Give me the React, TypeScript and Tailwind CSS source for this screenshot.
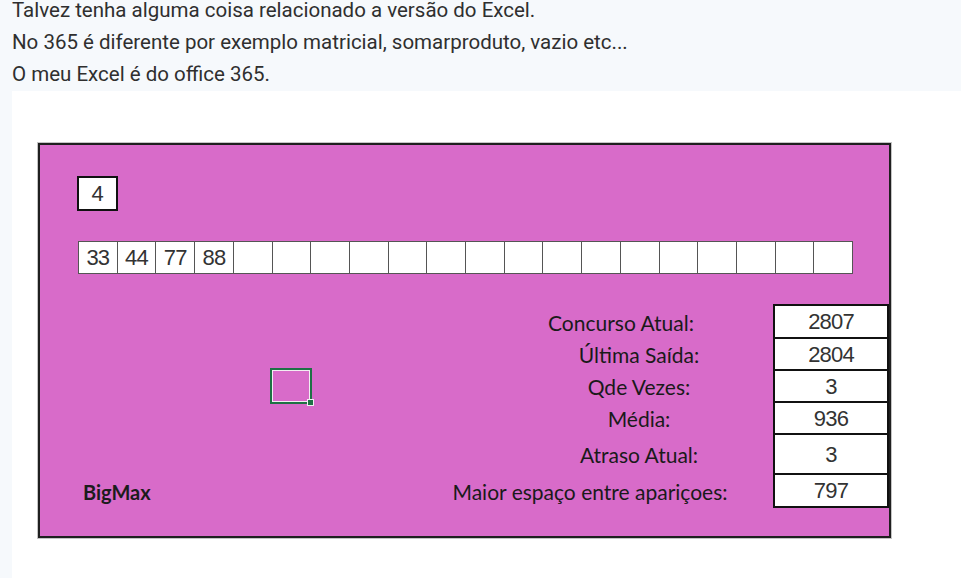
const numbers = ['33', '44', '77', '88', '', '', '', '', '', '', '', '', '', '', '', '', '', '', '', ''];

const stats = [
  { label: 'Concurso Atual:', value: '2807', height: 'h-[33px]', shift: 'pr-[36px]' },
  { label: 'Última Saída:', value: '2804', height: 'h-[32px]', shift: '' },
  { label: 'Qde Vezes:', value: '3', height: 'h-[32px]', shift: '' },
  { label: 'Média:', value: '936', height: 'h-[32px]', shift: '' },
  { label: 'Atraso Atual:', value: '3', height: 'h-[40px]', shift: '' },
  { label: 'Maior espaço entre apariçoes:', value: '797', height: 'h-[33px]', shift: 'pr-[98px]' },
];

const calibri = { fontFamily: 'Lato, "Open Sans", sans-serif' };
const arial = { fontFamily: '"Liberation Sans", Arial, sans-serif' };

export default function App() {
  return (
    <div className="min-h-screen w-[961px] h-[578px] overflow-hidden bg-[#f6f9fc]">
      {/* Post text */}
      <div
        className="-mt-[6px] pl-[12px] text-[20.5px] leading-[32px] text-[#2f2f2f]"
        style={{ fontFamily: 'Roboto, "Noto Sans", sans-serif' }}
      >
        <p>Talvez tenha alguma coisa relacionado a versão do Excel.</p>
        <p>No 365 é diferente por exemplo matricial, somarproduto, vazio etc...</p>
        <p>O meu Excel é do office 365.</p>
      </div>

      {/* Screenshot */}
      <div className="ml-[12px] mt-[1px] h-[500px] bg-white pl-[26px] pt-[52px]">
        <div className="flex w-[853px] flex-col border-2 border-[#1f1f1f] bg-[#d86bc9] pb-[28px] shadow-[0_0_0_1px_#c4c4c4]">
          <div className="pl-[37px] pt-[31px]">
            <div
              className="flex h-[35px] w-[41px] items-center justify-center border-2 border-[#111] bg-white text-[22px] text-[#333]"
              style={arial}
            >
              4
            </div>

            <div className="ml-[1px] mt-[30px] flex h-[33px] w-[775px] border-l border-[#555]">
              {numbers.map((n, i) => (
                <div
                  key={i}
                  className="flex h-full flex-1 items-center justify-center border-y border-r border-[#555] bg-white text-[22px] tracking-[-0.8px] text-[#333]"
                  style={arial}
                >
                  {n}
                </div>
              ))}
            </div>
          </div>

          {/* Lower section */}
          <div className="mt-[30px] flex">
            <div className="flex w-[465px] shrink-0 flex-col">
              <div className="relative ml-[230px] mt-[64px] h-[36px] w-[42px] border-2 border-[#1e7145] shadow-[inset_0_0_0_1px_#f2eef2]">
                <div className="absolute -bottom-[4px] -right-[4px] h-[7px] w-[7px] border border-[#f2eef2] bg-[#1e7145]" />
              </div>
              <div
                className="mt-auto flex h-[33px] items-center pl-[43px] text-[20px] font-bold text-[#1c1c1c]"
                style={calibri}
              >
                BigMax
              </div>
            </div>

            <div className="flex min-w-0 flex-1 flex-col pt-[2px]">
              {stats.map((s) => (
                <div
                  key={s.label}
                  className={`flex items-center justify-center whitespace-nowrap text-[21px] text-[#1a1a1a] ${s.height} ${s.shift}`}
                  style={calibri}
                >
                  {s.label}
                </div>
              ))}
            </div>

            <div className="flex w-[116px] shrink-0 flex-col border-x-2 border-t-2 border-[#111]">
              {stats.map((s) => (
                <div
                  key={s.label}
                  className={`flex items-center justify-center border-b-2 border-[#111] bg-white text-[22px] tracking-[-0.8px] text-[#333] ${s.height}`}
                  style={arial}
                >
                  {s.value}
                </div>
              ))}
            </div>
          </div>
        </div>
      </div>
    </div>
  );
}
